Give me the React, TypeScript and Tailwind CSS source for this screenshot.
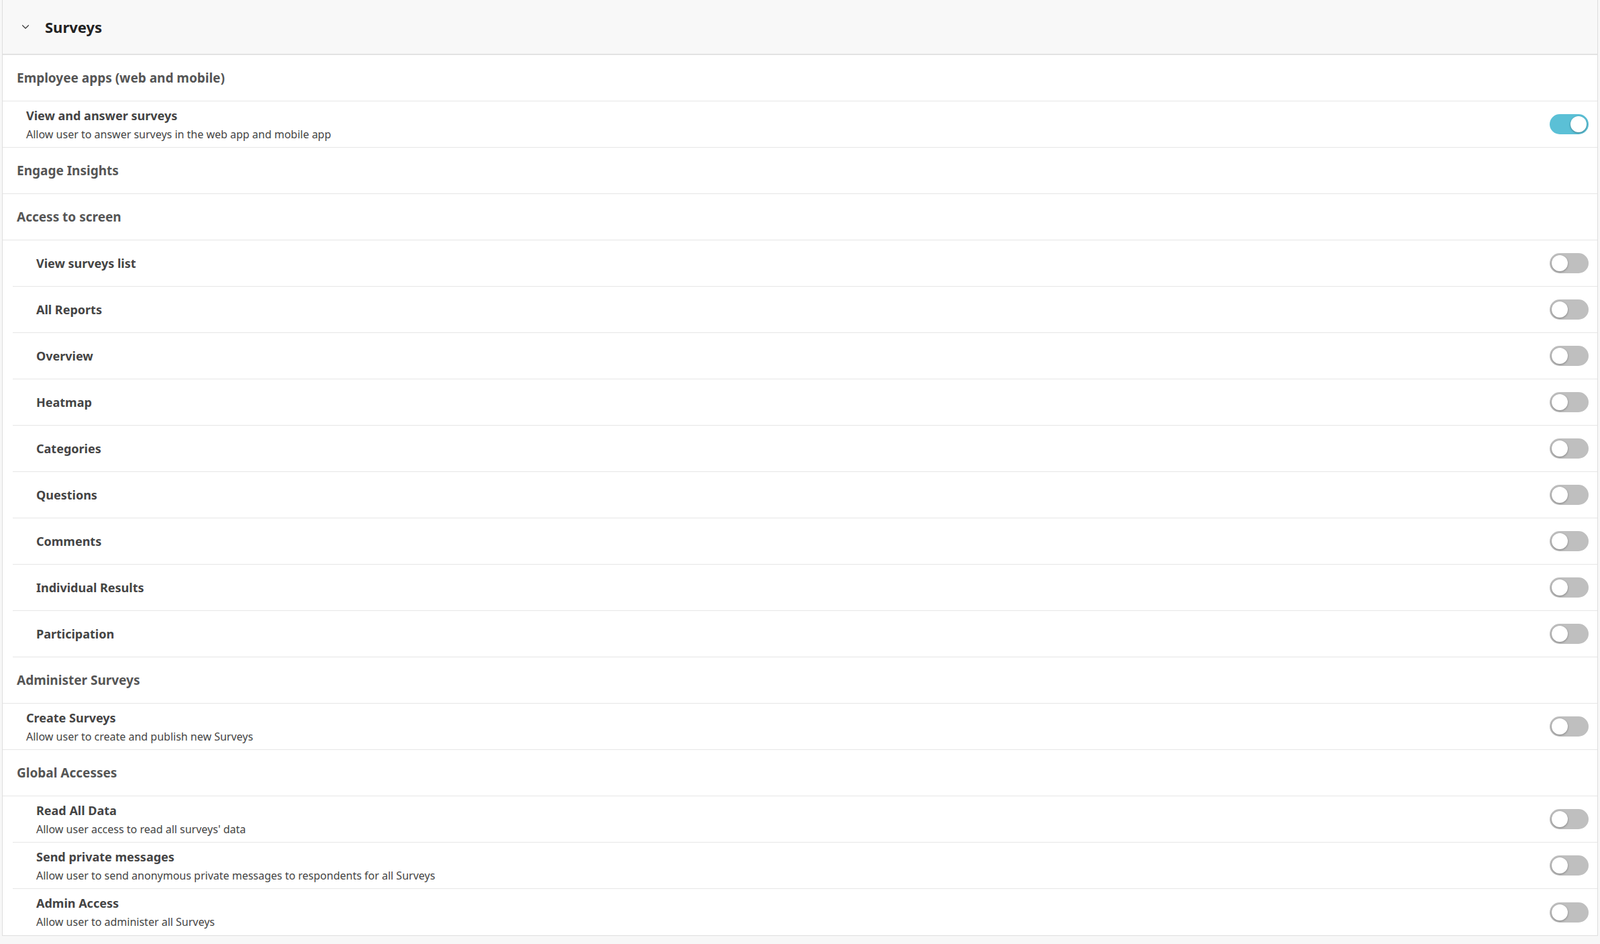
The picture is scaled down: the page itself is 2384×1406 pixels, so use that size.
import { ChevronDown } from 'lucide-react';

type Row =
  | { kind: 'section'; label: string }
  | { kind: 'item'; label: string; desc?: string; on?: boolean; nested?: boolean };

const rows: Row[] = [
  { kind: 'section', label: 'Employee apps (web and mobile)' },
  { kind: 'item', label: 'View and answer surveys', desc: 'Allow user to answer surveys in the web app and mobile app', on: true },
  { kind: 'section', label: 'Engage Insights' },
  { kind: 'section', label: 'Access to screen' },
  { kind: 'item', label: 'View surveys list', nested: true },
  { kind: 'item', label: 'All Reports', nested: true },
  { kind: 'item', label: 'Overview', nested: true },
  { kind: 'item', label: 'Heatmap', nested: true },
  { kind: 'item', label: 'Categories', nested: true },
  { kind: 'item', label: 'Questions', nested: true },
  { kind: 'item', label: 'Comments', nested: true },
  { kind: 'item', label: 'Individual Results', nested: true },
  { kind: 'item', label: 'Participation', nested: true },
  { kind: 'section', label: 'Administer Surveys' },
  { kind: 'item', label: 'Create Surveys', desc: 'Allow user to create and publish new Surveys' },
  { kind: 'section', label: 'Global Accesses' },
  { kind: 'item', label: 'Read All Data', desc: "Allow user access to read all surveys' data", nested: true },
  { kind: 'item', label: 'Send private messages', desc: 'Allow user to send anonymous private messages to respondents for all Surveys', nested: true },
  { kind: 'item', label: 'Admin Access', desc: 'Allow user to administer all Surveys', nested: true },
];

function Toggle({ on }: { on?: boolean }) {
  return (
    <div
      className={`relative h-[30px] w-[58px] rounded-full ${on ? 'bg-[#5bc0d6]' : 'bg-[#bfbfbf]'}`}
    >
      <div
        className={`absolute top-[3px] h-[24px] w-[24px] rounded-full bg-white shadow-[0_1px_3px_rgba(0,0,0,0.35)] ${on ? 'right-[3px]' : 'left-[3px]'}`}
      />
    </div>
  );
}

export default function App() {
  return (
    <div className="min-h-screen bg-[#f7f7f7] font-['Lato','Liberation_Sans',sans-serif]">
      <div className="ml-[3px] mr-[3px] border-x border-b border-[#dedede] bg-white">
        <div className="flex h-[82px] items-center gap-[20px] border-b-2 border-[#e2e2e2] bg-[#f8f8f8] pl-[25px]">
          <ChevronDown className="h-[18px] w-[18px] text-[#333]" strokeWidth={1.5} />
          <span className="text-[22px] font-bold text-[#222]">Surveys</span>
        </div>
        {rows.map((r, i) => {
          const last = i === rows.length - 1;
          if (r.kind === 'section') {
            return (
              <div
                key={i}
                className="flex h-[69px] items-center border-b border-[#e6e6e6] pl-[21px] text-[19px] font-bold text-[#555]"
              >
                {r.label}
              </div>
            );
          }
          return (
            <div key={i} className={r.nested ? 'pl-[15px]' : ''}>
              <div
                className={`flex h-[69px] items-center justify-between pr-[13px] ${last ? '' : 'border-b border-[#e6e6e6]'} ${r.nested ? 'pl-[35px]' : 'pl-[35px]'}`}
              >
                <div className="flex flex-col gap-[2px]">
                  <span className="text-[18px] font-bold text-[#444]">{r.label}</span>
                  {r.desc && <span className="text-[16px] text-[#444]">{r.desc}</span>}
                </div>
                <Toggle on={r.on} />
              </div>
            </div>
          );
        })}
      </div>
    </div>
  );
}
